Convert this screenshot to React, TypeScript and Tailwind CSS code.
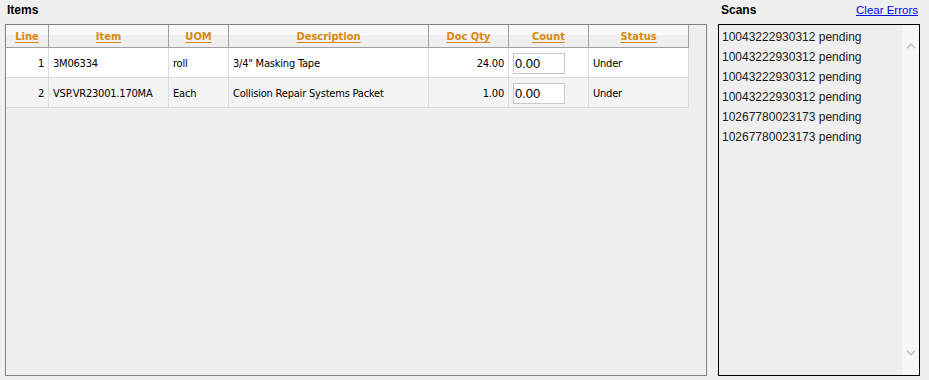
const columns = [
  { label: "Line", w: "w-[43px]" },
  { label: "Item", w: "w-[120px]" },
  { label: "UOM", w: "w-[60px]" },
  { label: "Description", w: "w-[200px]" },
  { label: "Doc Qty", w: "w-[80px]" },
  { label: "Count", w: "w-[80px]" },
  { label: "Status", w: "w-[100px]" },
];

const rows = [
  { line: 1, item: "3M06334", uom: "roll", desc: "3/4\" Masking Tape", qty: "24.00", count: "0.00", status: "Under" },
  { line: 2, item: "VSP.VR23001.170MA", uom: "Each", desc: "Collision Repair Systems Packet", qty: "1.00", count: "0.00", status: "Under" },
];

const scans = [
  "10043222930312 pending",
  "10043222930312 pending",
  "10043222930312 pending",
  "10043222930312 pending",
  "10267780023173 pending",
  "10267780023173 pending",
];

const gridFont = { fontFamily: '"DejaVu Sans Condensed", "DejaVu Sans", sans-serif' };

export default function App() {
  return (
    <main
      className="flex h-[380px] w-[929px] gap-[11px] bg-[#f0f0f0] pl-[5px] text-[#000]"
      style={{ fontFamily: '"Liberation Sans", Arial, sans-serif' }}
    >
      {/* Items */}
      <section className="flex w-[702px] flex-col">
        <h2 className="h-[24px] pl-[2px] pt-[3px] text-[12px] font-bold leading-[14px]">Items</h2>
        <div className="h-[352px] border border-[#828282] bg-[#efefef]">
          <div className="w-[683px] text-[11px]" style={gridFont}>
            <div className="flex h-[23px] border-b border-[#a0a0a0] bg-[linear-gradient(#f9f9f9_45%,#efefef_45%)]">
              {columns.map((c) => (
                <div
                  key={c.label}
                  className={`${c.w} flex items-center justify-center border-r border-[#a0a0a0] pt-[3px] font-bold text-[#d98a0e] underline underline-offset-2`}
                >
                  {c.label}
                </div>
              ))}
            </div>
            {rows.map((r, i) => (
              <div
                key={r.line}
                className={`flex h-[30px] border-b border-[#dcdcdc] tracking-[-0.2px] ${i % 2 ? "bg-[#f4f4f4]" : "bg-white"}`}
              >
                <div className="flex w-[43px] items-center justify-end border-r border-[#dcdcdc] pr-[4px] pt-[3px]">{r.line}</div>
                <div className="flex w-[120px] items-center border-r border-[#dcdcdc] pl-[4px] pt-[3px]">{r.item}</div>
                <div className="flex w-[60px] items-center border-r border-[#dcdcdc] pl-[4px] pt-[3px]">{r.uom}</div>
                <div className="flex w-[200px] items-center border-r border-[#dcdcdc] pl-[4px] pt-[3px]">{r.desc}</div>
                <div className="flex w-[80px] items-center justify-end border-r border-[#dcdcdc] pr-[4px] pt-[3px]">{r.qty}</div>
                <div className="flex w-[80px] items-center border-r border-[#dcdcdc] pl-[4px] pt-[1px]">
                  <input
                    readOnly
                    value={r.count}
                    className="h-[21px] w-[52px] border border-[#c8c8c8] bg-white pl-[1px] text-[13px] leading-[19px] tracking-normal outline-none"
                    style={{ fontFamily: '"Liberation Sans", Arial, sans-serif' }}
                  />
                </div>
                <div className="flex w-[100px] items-center border-r border-[#dcdcdc] pl-[4px] pt-[3px]">{r.status}</div>
              </div>
            ))}
          </div>
        </div>
      </section>

      {/* Scans */}
      <section className="flex w-[202px] flex-col">
        <div className="flex h-[24px] items-start justify-between pr-[2px] pt-[3px] text-[12px] leading-[14px]">
          <h2 className="pl-[3px] font-bold">Scans</h2>
          <a href="#" className="text-[11.5px] text-[#0000ff] underline">Clear Errors</a>
        </div>
        <div className="flex h-[352px] border border-black bg-[#efefef]">
          <ul className="flex-1 pl-[3px] pt-[2px] text-[12px] leading-[20px] text-[#1a1a1a]">
            {scans.map((s, i) => (
              <li key={i}>{s}</li>
            ))}
          </ul>
          <div className="flex w-[17px] flex-col items-center justify-between bg-[#f7f7f7] pb-[19px] pt-[18px]">
            <svg width="10" height="6" viewBox="0 0 10 6" fill="none" stroke="#c4c4c4" strokeWidth="1.6">
              <path d="M1 5.2 5 1.2 9 5.2" />
            </svg>
            <svg width="10" height="6" viewBox="0 0 10 6" fill="none" stroke="#c4c4c4" strokeWidth="1.6">
              <path d="M1 0.8 5 4.8 9 0.8" />
            </svg>
          </div>
        </div>
      </section>
    </main>
  );
}
